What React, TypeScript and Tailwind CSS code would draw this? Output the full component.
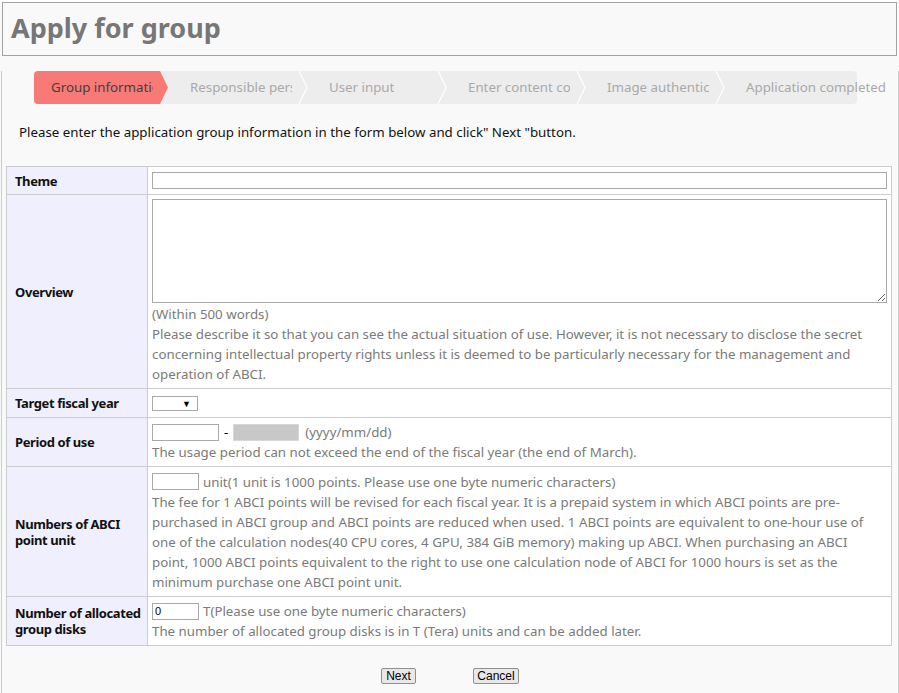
const steps = [
  "Group information",
  "Responsible person",
  "User input",
  "Enter content confirmation",
  "Image authentication",
  "Application completed",
];

function StepBar() {
  return (
    <div className="ml-[32px] mt-[15px] flex h-[33px] w-[823px] rounded-[4px] bg-[#ededed]">
      {steps.map((s, i) => {
        const first = i === 0;
        const last = i === steps.length - 1;
        return (
          <div key={s} className="relative flex h-full w-[139px] shrink-0 items-center">
            {first && (
              <div className="absolute inset-y-0 left-0 w-[135px] rounded-l-[4px] bg-[#f87a77] [clip-path:polygon(0_0,126px_0,134px_50%,126px_100%,0_100%)]" />
            )}
            <span
              className={
                "relative pl-[17px] text-[13.3px] whitespace-nowrap " +
                (first ? "text-[#3f3f3f] " : "text-[#a9a9a9] ") +
                (last ? "" : "w-[119px] overflow-hidden")
              }
            >
              {s}
            </span>
            {!first && !last && (
              <svg className="absolute top-0 left-[124px]" width="12" height="33" viewBox="0 0 12 33">
                <polyline points="2,0 10,16.5 2,33" fill="none" stroke="#ffffff" strokeWidth="1.2" />
              </svg>
            )}
          </div>
        );
      })}
    </div>
  );
}

function Label({ children }: { children: React.ReactNode }) {
  return (
    <td className="w-[141px] border border-[#cccccc] bg-[#efeffd] pl-[8px] align-middle text-[13px] leading-[16px] font-bold tracking-[-0.4px] text-[#111]">
      {children}
    </td>
  );
}

function Cell({ children }: { children: React.ReactNode }) {
  return (
    <td className="border border-[#cccccc] bg-white py-[4px] pr-[4px] pl-[4px] align-top text-[13.3px] leading-[20px] text-[#7a7a7a]">
      {children}
    </td>
  );
}

export default function App() {
  return (
    <div className="min-h-[693px] bg-[#f9f9f9] font-['Noto_Sans',sans-serif]">
      <div className="mt-[2px] ml-[2px] flex h-[54px] w-[895px] items-center border border-[#a3a3a3] pb-[3px] pl-[8px]">
        <h1 className="text-[27px] leading-none font-bold text-[#777777]">Apply for group</h1>
      </div>
      <div className="ml-[1px] min-h-[637px] w-[898px] border-x border-[#cccccc]">
        <StepBar />
        <p className="mt-[18px] ml-[17px] text-[13.3px] leading-[20px] text-[#111]">
          Please enter the application group information in the form below and click" Next "button.
        </p>
        <table className="mt-[24px] ml-[4px] w-[886px] border-collapse border border-[#cccccc]">
          <tbody>
            <tr>
              <Label>Theme</Label>
              <Cell>
                <div className="flex h-[19px] items-center">
                  <input className="h-[17px] w-full border border-[#a9a9a9] bg-white" />
                </div>
              </Cell>
            </tr>
            <tr>
              <Label>Overview</Label>
              <Cell>
                <textarea className="block h-[104px] w-full resize-y border border-[#a9a9a9] bg-white" />
                <div className="mt-[1px]">(Within 500 words)</div>
                <div>
                  Please describe it so that you can see the actual situation of use. However, it is not necessary to
                  disclose the secret concerning intellectual property rights unless it is deemed to be particularly
                  necessary for the management and operation of ABCI.
                </div>
              </Cell>
            </tr>
            <tr>
              <Label>Target fiscal year</Label>
              <Cell>
                <div className="flex h-[20px] items-center">
                  <div className="flex h-[15px] w-[46px] items-center justify-end border border-[#a9a9a9] bg-white pr-[6px] text-[9px] leading-none text-black">
                    ▼
                  </div>
                </div>
              </Cell>
            </tr>
            <tr>
              <Label>Period of use</Label>
              <Cell>
                <div className="flex h-[20px] items-center">
                  <input className="h-[17px] w-[67px] border border-[#a9a9a9] bg-white" />
                  <span className="mx-[5px] text-black">-</span>
                  <div className="h-[17px] w-[66px] border border-[#d8d8d8] bg-[#c8c8c8]" />
                  <span className="ml-[6px]">(yyyy/mm/dd)</span>
                </div>
                <div>The usage period can not exceed the end of the fiscal year (the end of March).</div>
              </Cell>
            </tr>
            <tr>
              <Label>Numbers of ABCI point unit</Label>
              <Cell>
                <div className="flex h-[21px] items-center">
                  <input className="h-[17px] w-[47px] border border-[#a9a9a9] bg-white" />
                  <span className="ml-[4px]">unit(1 unit is 1000 points. Please use one byte numeric characters)</span>
                </div>
                <div>
                  The fee for 1 ABCI points will be revised for each fiscal year. It is a prepaid system in which ABCI
                  points are pre-purchased in ABCI group and ABCI points are reduced when used. 1 ABCI points are
                  equivalent to one-hour use of one of the calculation nodes(40 CPU cores, 4 GPU, 384 GiB memory) making
                  up ABCI. When purchasing an ABCI point, 1000 ABCI points equivalent to the right to use one calculation
                  node of ABCI for 1000 hours is set as the minimum purchase one ABCI point unit.
                </div>
              </Cell>
            </tr>
            <tr>
              <Label>Number of allocated group disks</Label>
              <Cell>
                <div className="flex h-[20px] items-center">
                  <input
                    defaultValue="0"
                    className="h-[17px] w-[47px] border border-[#a9a9a9] bg-white px-[2px] font-['Liberation_Sans',sans-serif] text-[11px] text-black"
                  />
                  <span className="ml-[4px]">T(Please use one byte numeric characters)</span>
                </div>
                <div>The number of allocated group disks is in T (Tera) units and can be added later.</div>
              </Cell>
            </tr>
          </tbody>
        </table>
        <div className="mt-[22px] flex justify-center gap-[57px]">
          <button className="h-[16px] w-[35px] rounded-[2px] border border-[#8f8f8f] bg-[#e8e8e8] font-['Liberation_Sans',sans-serif] text-[12px] leading-none text-black">
            Next
          </button>
          <button className="h-[16px] w-[46px] rounded-[2px] border border-[#8f8f8f] bg-[#e8e8e8] font-['Liberation_Sans',sans-serif] text-[12px] leading-none text-black">
            Cancel
          </button>
        </div>
      </div>
    </div>
  );
}
